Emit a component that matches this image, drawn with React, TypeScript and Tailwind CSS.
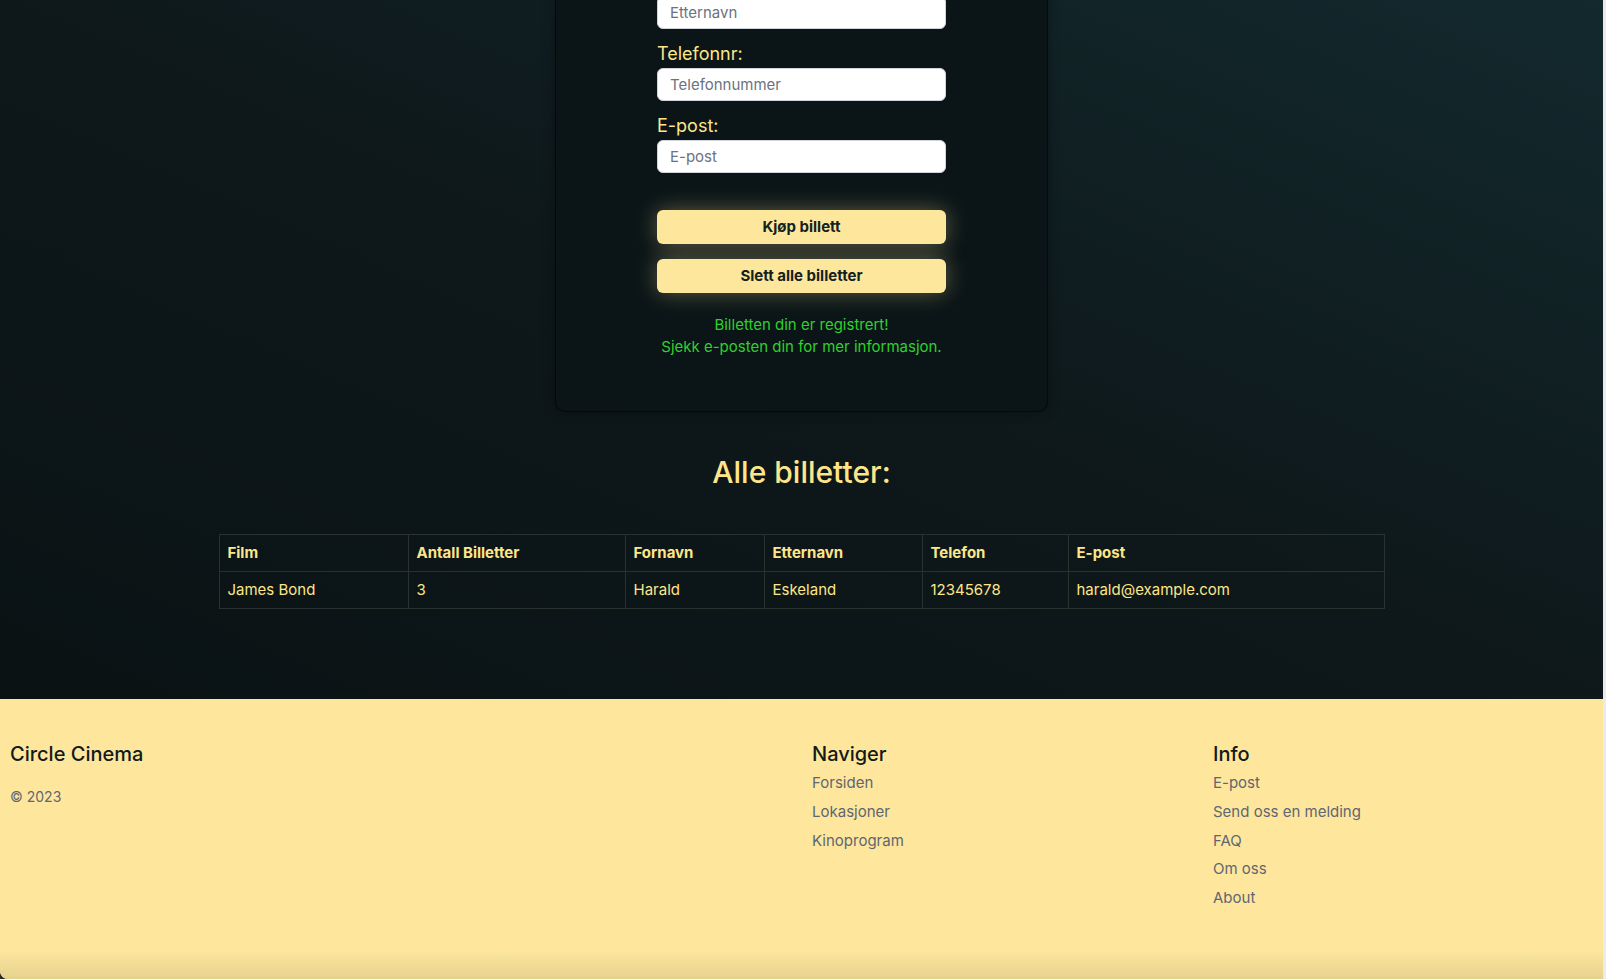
import React from "react";

const tickets = [
  {
    film: "James Bond",
    antall: "3",
    fornavn: "Harald",
    etternavn: "Eskeland",
    telefon: "12345678",
    epost: "harald@example.com",
  },
];

const inputClass =
  "h-[33px] w-[289px] rounded-md border border-[#d1d5db] bg-white px-3 text-[15px] text-[#111] outline-none placeholder:text-[#6b7280]";

function Field({ label, placeholder }: { label: string; placeholder: string }) {
  return (
    <div className="flex flex-col">
      <label className="text-[18px] leading-[28px] text-[#fde68a]">{label}</label>
      <input type="text" placeholder={placeholder} className={inputClass} />
    </div>
  );
}

export default function App() {
  return (
    <div
      className="flex min-h-screen bg-[#2b2b2b]"
      style={{ fontFamily: "Inter, 'Noto Sans', sans-serif" }}
    >
      <div className="flex flex-1 flex-col overflow-hidden rounded-bl-[8px]">
        <main className="flex h-[699px] flex-col items-center overflow-hidden bg-[linear-gradient(to_top_right,#0a1214,#0e181a_50%,#13292e)]">
          {/* bestillingsskjema (toppen er scrollet ut av bildet) */}
          <div className="-mt-[12px] flex w-[493px] flex-col items-center rounded-b-[10px] border border-t-0 border-[#05090a] bg-[#0b1517] pb-[53px] shadow-[0_0_12px_rgba(0,0,0,0.35)]">
            <div className="flex flex-col gap-[11px]">
              <input type="text" placeholder="Etternavn" className={inputClass + " mt-[8px]"} />
              <Field label="Telefonnr:" placeholder="Telefonnummer" />
              <Field label="E-post:" placeholder="E-post" />
            </div>

            <div className="mt-[37px] flex flex-col gap-[15px]">
              <button className="h-[34px] w-[289px] rounded-md bg-[#fde79d] text-[15px] font-bold text-[#13221f] shadow-[0_0_22px_rgba(253,231,157,0.35)]">
                Kjøp billett
              </button>
              <button className="h-[34px] w-[289px] rounded-md bg-[#fde79d] text-[15px] font-bold text-[#13221f] shadow-[0_0_22px_rgba(253,231,157,0.35)]">
                Slett alle billetter
              </button>
            </div>

            <div className="mt-[21px] text-center text-[15px] leading-[22px] text-[#2ed12e]">
              <p>Billetten din er registrert!</p>
              <p>Sjekk e-posten din for mer informasjon.</p>
            </div>
          </div>

          <h2 className="mt-[42px] text-[30px] leading-[36px] font-medium text-[#fde68a]">
            Alle billetter:
          </h2>

          <table className="mt-[44px] w-[1166px] table-fixed border-collapse text-left text-[15px] text-[#fde68a]">
            <colgroup>
              <col className="w-[189px]" />
              <col className="w-[217px]" />
              <col className="w-[139px]" />
              <col className="w-[158px]" />
              <col className="w-[146px]" />
              <col />
            </colgroup>
            <thead>
              <tr className="h-[37px]">
                {["Film", "Antall Billetter", "Fornavn", "Etternavn", "Telefon", "E-post"].map((h) => (
                  <th key={h} className="border border-[#29322f] px-2 font-bold">
                    {h}
                  </th>
                ))}
              </tr>
            </thead>
            <tbody>
              {tickets.map((t) => (
                <tr key={t.telefon} className="h-[37px]">
                  <td className="border border-[#29322f] px-2">{t.film}</td>
                  <td className="border border-[#29322f] px-2">{t.antall}</td>
                  <td className="border border-[#29322f] px-2">{t.fornavn}</td>
                  <td className="border border-[#29322f] px-2">{t.etternavn}</td>
                  <td className="border border-[#29322f] px-2">{t.telefon}</td>
                  <td className="border border-[#29322f] px-2">{t.epost}</td>
                </tr>
              ))}
            </tbody>
          </table>
        </main>

        <footer className="flex h-[280px] flex-col bg-[#fee79d]">
          <div className="grid grid-cols-4 gap-x-[21px] px-[10px] pt-[41px]">
            <div className="col-span-2">
              <h3 className="text-[20px] leading-[28px] font-medium text-[#121a1c]">Circle Cinema</h3>
              <p className="mt-[19px] text-[14px] leading-[20px] text-[#5f6672]">© 2023</p>
            </div>
            <div>
              <h3 className="text-[20px] leading-[28px] font-medium text-[#121a1c]">Naviger</h3>
              <ul className="mt-[1px] text-[15px] leading-[28.8px] text-[#5f6672]">
                <li>Forsiden</li>
                <li>Lokasjoner</li>
                <li>Kinoprogram</li>
              </ul>
            </div>
            <div>
              <h3 className="text-[20px] leading-[28px] font-medium text-[#121a1c]">Info</h3>
              <ul className="mt-[1px] text-[15px] leading-[28.8px] text-[#5f6672]">
                <li>E-post</li>
                <li>Send oss en melding</li>
                <li>FAQ</li>
                <li>Om oss</li>
                <li>About</li>
              </ul>
            </div>
          </div>
          <div className="flex-1" />
          <div className="h-[30px] bg-gradient-to-b from-[#fee79d] to-[#e6d28f]" />
        </footer>
      </div>
      <div className="w-[3px] bg-[#ebebeb]" />
    </div>
  );
}
